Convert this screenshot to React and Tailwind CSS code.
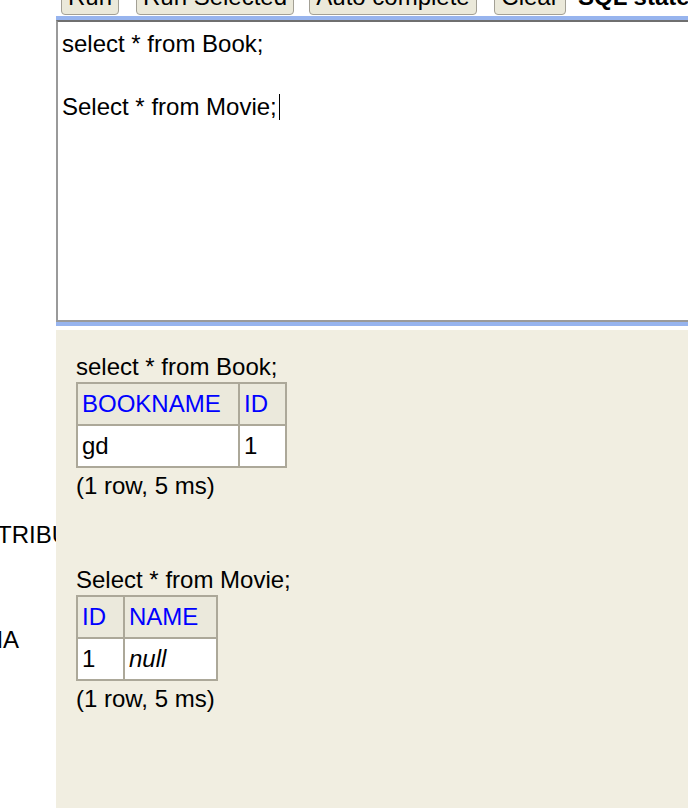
import React from "react";

const font = { fontFamily: '"Liberation Sans", Arial, sans-serif' };

function Btn({ w, children }) {
  return (
    <div
      className={`${w} h-[36px] shrink-0 flex items-center justify-center rounded-[4px] border border-[#a3a095] bg-[#ebe9da] text-[24px] leading-none text-black`}
    >
      {children}
    </div>
  );
}

function Grid({ cols, head, body }) {
  return (
    <div className={`inline-grid ${cols} grid-rows-[40px_40px] gap-[2px] p-[2px] bg-[#aca899]`}>
      {head.map((h, i) => (
        <div key={"h" + i} className="bg-[#ebe9dc] pl-[4px] flex items-center text-[24px] text-[#0000ff]">
          {h}
        </div>
      ))}
      {body.map((b, i) => (
        <div key={"b" + i} className="bg-white pl-[4px] flex items-center text-[24px] text-black">
          {b}
        </div>
      ))}
    </div>
  );
}

export default function App() {
  return (
    <div className="w-[688px] h-[808px] overflow-hidden bg-white flex" style={font}>
      {/* left clipped panel */}
      <div className="w-[56px] shrink-0 overflow-hidden text-[24px] leading-[28px] text-black whitespace-nowrap">
        <div className="pt-[521px] ml-[-3px]">TRIBUTES</div>
        <div className="mt-[77px] ml-[-17px]">MA</div>
      </div>

      {/* right main */}
      <div className="flex-1 flex flex-col min-w-0">
        {/* toolbar (cropped at top) */}
        <div className="mt-[-21px] h-[37px] flex items-start pl-[5px] whitespace-nowrap">
          <Btn w="w-[58px]">Run</Btn>
          <div className="w-[17px] shrink-0" />
          <Btn w="w-[158px]">Run Selected</Btn>
          <div className="w-[15px] shrink-0" />
          <Btn w="w-[168px]">Auto complete</Btn>
          <div className="w-[17px] shrink-0" />
          <Btn w="w-[72px]">Clear</Btn>
          <div className="h-[36px] flex items-center pl-[12px] text-[24px] font-bold leading-none text-black">
            SQL statement:
          </div>
        </div>
        <div className="h-[4px] bg-[#97b4ee]" />

        {/* editor */}
        <div className="h-[302px] border-t-2 border-l-2 border-b-2 border-t-[#6f6f6f] border-l-[#9a9a9a] border-b-[#9a9a9a] bg-white pl-[4px] pt-[6px] text-[24px] leading-[31.5px] text-black whitespace-nowrap">
          <div>select * from Book;</div>
          <div>&nbsp;</div>
          <div className="flex items-center">
            <span>Select * from Movie;</span>
            <span className="inline-block w-[1px] h-[26px] bg-black ml-[2px]" />
          </div>
        </div>
        <div className="h-[4px] bg-[#97b4ee]" />
        <div className="h-[4px] bg-white" />

        {/* results */}
        <div className="flex-1 bg-[#f1eee1] pl-[20px] pt-[22px] text-[24px] leading-[30px] text-black">
          <div>select * from Book;</div>
          <Grid cols="grid-cols-[160px_45px]" head={["BOOKNAME", "ID"]} body={["gd", "1"]} />
          <div className="mt-[3px]">(1 row, 5 ms)</div>

          <div className="mt-[64px]">Select * from Movie;</div>
          <Grid
            cols="grid-cols-[45px_91px]"
            head={["ID", "NAME"]}
            body={["1", <i key="n">null</i>]}
          />
          <div className="mt-[3px]">(1 row, 5 ms)</div>
        </div>
      </div>
    </div>
  );
}
